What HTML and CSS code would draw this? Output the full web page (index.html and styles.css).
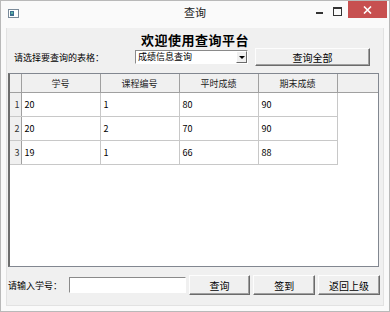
FILE: index.html
```html
<!DOCTYPE html>
<html lang="zh-CN">
<head>
  <meta charset="UTF-8">
  <title>查询</title>
  <link rel="stylesheet" href="styles.css">
</head>
<body>
  <div class="window">
    <div class="titlebar">
      <svg class="app-icon" width="11" height="9" viewBox="0 0 11 9">
        <rect x="0.5" y="0.5" width="10" height="8" fill="#fff" stroke="#7a8a99"/>
        <rect x="2" y="2" width="4" height="5" fill="#3b6e8f"/>
        <rect x="3" y="3" width="2" height="2" fill="#5fb4a4"/>
      </svg>
      <span class="title">查询</span>
      <div class="controls">
        <span class="ctl min"></span>
        <span class="ctl max"></span>
        <span class="ctl close">
          <svg width="9" height="8" viewBox="0 0 9 8">
            <path d="M1 0.5 L8 7.5 M8 0.5 L1 7.5" stroke="#fff" stroke-width="1.6"/>
          </svg>
        </span>
      </div>
    </div>

    <div class="client">
      <h1>欢迎使用查询平台</h1>

      <div class="pick-row">
        <label class="pick-label">请选择要查询的表格：</label>
        <div class="combo">
          <span class="combo-text">成绩信息查询</span>
          <span class="combo-btn"></span>
        </div>
        <button class="btn btn-all">查询全部</button>
      </div>

      <div class="grid">
        <table>
          <colgroup>
            <col class="c-head">
            <col class="c-data">
            <col class="c-data">
            <col class="c-data">
            <col class="c-data">
            <col>
          </colgroup>
          <thead>
            <tr>
              <th class="corner"></th>
              <th>学号</th>
              <th>课程编号</th>
              <th>平时成绩</th>
              <th>期末成绩</th>
              <th class="filler"></th>
            </tr>
          </thead>
          <tbody>
            <tr>
              <th class="rownum">1</th>
              <td>20</td><td>1</td><td>80</td><td>90</td><td class="filler"></td>
            </tr>
            <tr>
              <th class="rownum">2</th>
              <td>20</td><td>2</td><td>70</td><td>90</td><td class="filler"></td>
            </tr>
            <tr>
              <th class="rownum">3</th>
              <td>19</td><td>1</td><td>66</td><td>88</td><td class="filler"></td>
            </tr>
          </tbody>
        </table>
      </div>

      <div class="search-row">
        <label class="search-label">请输入学号：</label>
        <div class="field"></div>
        <button class="btn btn-small">查询</button>
        <button class="btn btn-small">签到</button>
        <button class="btn btn-small">返回上级</button>
      </div>
    </div>
  </div>
</body>
</html>
```

FILE: styles.css
```css
body {
  margin: 0;
  font-family: "Noto Sans CJK SC", "Liberation Sans", sans-serif;
  font-size: 9px;
  color: #000;
  background: #fff;
}

.window {
  width: 390px;
  height: 312px;
  box-sizing: border-box;
  border: 1px solid #b9b9b9;
  background: #fafafa;
}

/* title bar */
.titlebar {
  height: 27px;
  display: flex;
  align-items: flex-start;
  position: relative;
}
.app-icon {
  margin: 8px 0 0 7px;
}
.title {
  position: absolute;
  left: 0;
  right: 0;
  top: 4px;
  text-align: center;
  font-size: 11px;
  line-height: 14px;
  color: #222;
}
.controls {
  margin-left: auto;
  display: flex;
  align-items: flex-start;
}
.ctl {
  display: flex;
  align-items: center;
  justify-content: center;
}
.min {
  width: 7px;
  height: 2px;
  background: #333;
  margin: 11px 10px 0 0;
}
.max {
  width: 7px;
  height: 6px;
  border: 1px solid #333;
  border-top-width: 2px;
  margin: 6px 6px 0 0;
}
.close {
  width: 39px;
  height: 17px;
  background: #c75050;
  margin-right: 2px;
}

/* client area */
.client {
  margin: 0 5px 0 5px;
  height: 278px;
  background: #f0f0f0;
  border: 1px solid #e2e2e2;
  border-top: none;
  box-sizing: border-box;
  display: flex;
  flex-direction: column;
}

h1 {
  margin: 4px 0 0;
  font-size: 13px;
  line-height: 16px;
  font-weight: bold;
  text-align: center;
  letter-spacing: 0.5px;
}

.pick-row {
  height: 18px;
  display: flex;
  align-items: center;
  padding-left: 7px;
}
.pick-label {
  width: 121px;
  flex: none;
}
.combo {
  width: 113px;
  height: 14px;
  box-sizing: border-box;
  border: 1px solid;
  border-color: #8a8a8a #ffffff #ffffff #8a8a8a;
  background: #fff;
  display: flex;
  align-items: center;
}
.combo-text {
  padding-left: 2px;
  flex: 1;
  line-height: 12px;
}
.combo-btn {
  width: 11px;
  height: 12px;
  box-sizing: border-box;
  background: #f0f0f0;
  border: 1px solid;
  border-color: #fff #6b6b6b #6b6b6b #fff;
  position: relative;
}
.combo-btn::after {
  content: "";
  position: absolute;
  left: 2px;
  top: 4px;
  border-left: 3px solid transparent;
  border-right: 3px solid transparent;
  border-top: 3px solid #000;
}

.btn {
  font-family: inherit;
  font-size: 10px;
  color: #000;
  background: #f0f0f0;
  border: 1px solid;
  border-color: #fdfdfd #6b6b6b #6b6b6b #fdfdfd;
  box-shadow: inset -1px -1px 0 #a0a0a0;
  padding: 0;
  margin: 0;
}
.btn-all {
  width: 115px;
  height: 18px;
  margin-left: 7px;
}

/* table */
.grid {
  margin: 7px 0 0 1px;
  width: 371px;
  height: 194px;
  box-sizing: border-box;
  border: 1px solid #828790;
  border-left: 2px solid #6e6e6e;
  background: #fff;
}
table {
  border-collapse: collapse;
  table-layout: fixed;
  width: 100%;
}
.c-head {
  width: 11px;
}
.c-data {
  width: 79px;
}
thead th {
  height: 18px;
  padding: 0;
  background: #f0f0f0;
  border-right: 1px solid #a0a0a0;
  border-bottom: 1px solid #a0a0a0;
  font-weight: normal;
  color: #222;
}
thead th.filler {
  border-right: none;
}
.rownum {
  height: 23px;
  padding: 0 1px 0 0;
  background: #f0f0f0;
  border-right: 1px solid #a0a0a0;
  border-bottom: 1px solid #c8c8c8;
  font-weight: normal;
  text-align: right;
  color: #333;
}
td {
  height: 23px;
  padding: 0 0 0 3px;
  border-right: 1px solid #c8c8c8;
  border-bottom: 1px solid #c8c8c8;
  white-space: nowrap;
}
td.filler {
  border: none;
}

/* bottom row */
.search-row {
  margin-top: 8px;
  height: 20px;
  display: flex;
  align-items: center;
  padding-left: 1px;
}
.search-label {
  width: 61px;
  flex: none;
}
.field {
  width: 117px;
  height: 16px;
  box-sizing: border-box;
  border: 1px solid;
  border-color: #8a8a8a #ffffff #ffffff #8a8a8a;
  background: #fff;
  margin-right: 3px;
}
.btn-small {
  width: 62px;
  height: 20px;
  margin-right: 3px;
}
```
